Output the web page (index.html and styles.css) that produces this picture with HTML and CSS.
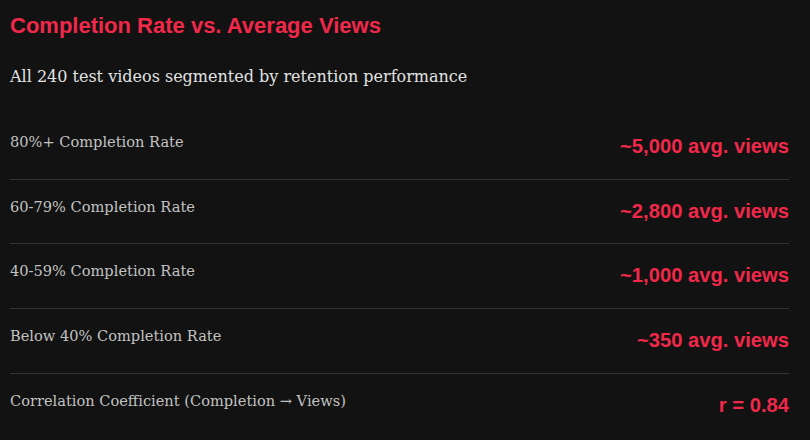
FILE: index.html
```html
<!DOCTYPE html>
<html lang="en">
<head>
<meta charset="utf-8">
<title>Completion Rate vs. Average Views</title>
<link rel="stylesheet" href="styles.css">
</head>
<body>
<div class="panel">
  <h2 class="title">Completion Rate vs. Average Views</h2>
  <p class="subtitle">All 240 test videos segmented by retention performance</p>
  <div class="rows">
    <div class="row"><span class="label">80%+ Completion Rate</span><span class="value">~5,000 avg. views</span></div>
    <div class="row"><span class="label">60-79% Completion Rate</span><span class="value">~2,800 avg. views</span></div>
    <div class="row"><span class="label">40-59% Completion Rate</span><span class="value">~1,000 avg. views</span></div>
    <div class="row"><span class="label">Below 40% Completion Rate</span><span class="value">~350 avg. views</span></div>
    <div class="row"><span class="label">Correlation Coefficient (Completion → Views)</span><span class="value">r = 0.84</span></div>
  </div>
</div>
</body>
</html>
```
FILE: styles.css
```css
html, body {
  margin: 0;
  padding: 0;
  background: #121212;
}
.panel {
  width: 779px;
  padding: 0 0 0 10px;
  box-sizing: content-box;
}
.title {
  margin: 0;
  padding-top: 12px;
  font-family: "Liberation Sans", Arial, sans-serif;
  font-weight: bold;
  font-size: 22px;
  line-height: 28px;
  color: #f0284a;
}
.subtitle {
  margin: 0;
  padding-top: 25px;
  font-family: "DejaVu Serif", serif;
  font-size: 16px;
  line-height: 24px;
  color: #e2e2e2;
}
.rows {
  margin-top: 26px;
}
.row {
  display: flex;
  justify-content: space-between;
  align-items: flex-start;
  height: 64.67px;
  border-bottom: 1px solid #333;
  box-sizing: border-box;
}
.row:last-child {
  border-bottom: none;
}
.label {
  font-family: "DejaVu Serif", serif;
  font-size: 14.6px;
  line-height: 20px;
  color: #c2c2c2;
  padding-top: 17px;
}
.value {
  font-family: "Liberation Sans", Arial, sans-serif;
  font-weight: bold;
  font-size: 20.2px;
  line-height: 24px;
  color: #f0284a;
  padding-top: 19px;
}
```
